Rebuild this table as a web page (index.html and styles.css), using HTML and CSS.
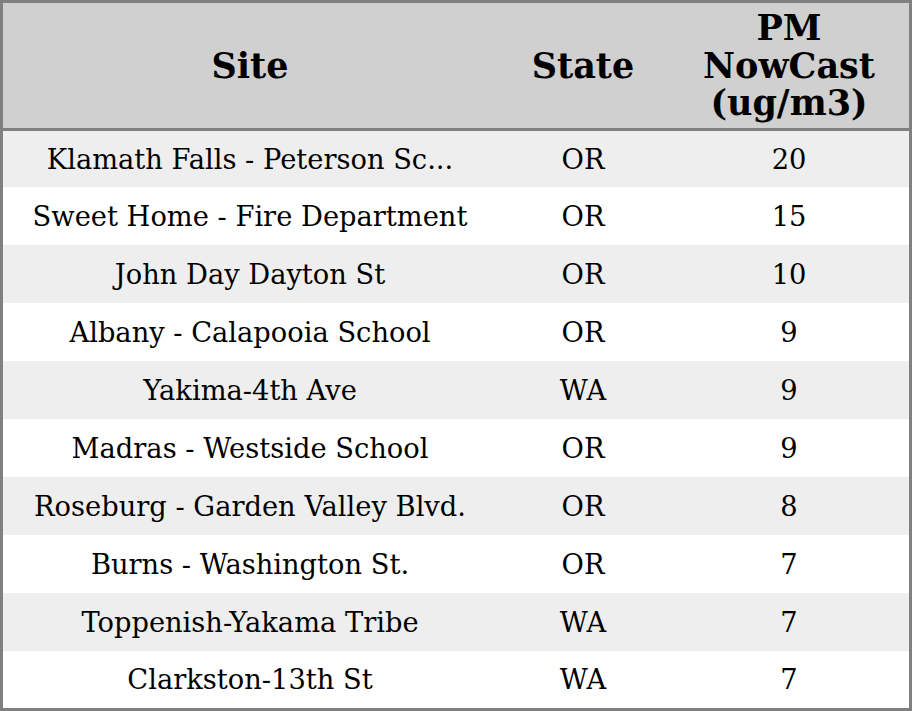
FILE: index.html
```html
<!DOCTYPE html>
<html>
<head>
<meta charset="utf-8">
<link rel="stylesheet" href="styles.css">
</head>
<body>
<table class="aq-table">
  <thead>
    <tr class="head-row">
      <th class="col-site">Site</th>
      <th class="col-state">State</th>
      <th class="col-pm">PM NowCast (ug/m3)</th>
    </tr>
  </thead>
  <tbody>
    <tr class="first-row"><td class="site">Klamath Falls - Peterson Sc...</td><td>OR</td><td>20</td></tr>
    <tr><td class="site">Sweet Home - Fire Department</td><td>OR</td><td>15</td></tr>
    <tr><td class="site">John Day Dayton St</td><td>OR</td><td>10</td></tr>
    <tr><td class="site">Albany - Calapooia School</td><td>OR</td><td>9</td></tr>
    <tr><td class="site">Yakima-4th Ave</td><td>WA</td><td>9</td></tr>
    <tr><td class="site">Madras - Westside School</td><td>OR</td><td>9</td></tr>
    <tr><td class="site">Roseburg - Garden Valley Blvd.</td><td>OR</td><td>8</td></tr>
    <tr><td class="site">Burns - Washington St.</td><td>OR</td><td>7</td></tr>
    <tr><td class="site">Toppenish-Yakama Tribe</td><td>WA</td><td>7</td></tr>
    <tr class="last-row"><td class="site">Clarkston-13th St</td><td>WA</td><td>7</td></tr>
  </tbody>
</table>
</body>
</html>
```
FILE: styles.css
```css
html, body {
  margin: 0;
  padding: 0;
  background: #ffffff;
}
.aq-table {
  width: 912px;
  height: 711px;
  border: 3px solid #808080;
  border-collapse: separate;
  border-spacing: 0;
  table-layout: fixed;
  font-family: "DejaVu Serif", serif;
  color: #000000;
  box-sizing: border-box;
}
.col-site { width: 494px; }
.col-state { width: 172px; }
.col-pm { width: 240px; }
.head-row th {
  height: 125px;
  padding: 0;
  background: #d0d0d0;
  border-bottom: 3px solid #808080;
  font-size: 35px;
  line-height: 37.5px;
  font-weight: bold;
  text-align: center;
  vertical-align: middle;
}
tbody td {
  height: 58px;
  padding: 0;
  font-size: 27.3px;
  text-align: center;
  vertical-align: middle;
  white-space: nowrap;
}
tbody tr:nth-child(odd) td {
  background: #eeeeee;
}
tbody tr.first-row td {
  height: 56px;
}
tbody tr.last-row td {
  height: 57px;
}
```
